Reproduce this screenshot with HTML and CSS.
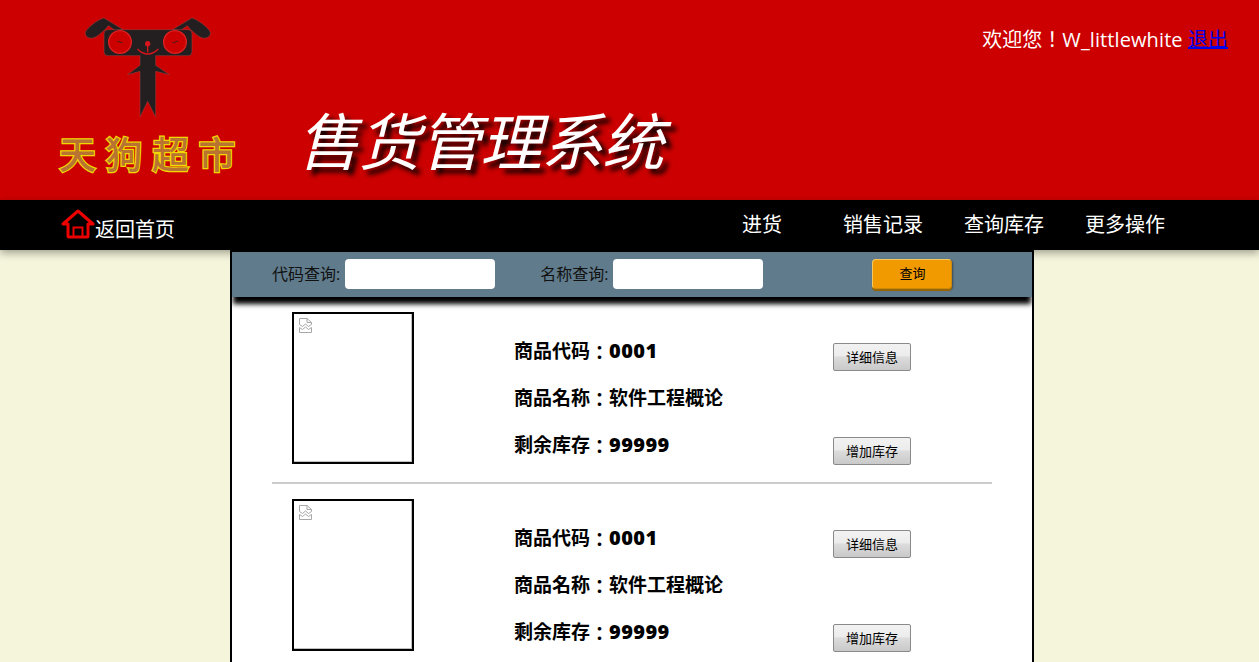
FILE: index.html
```html
<!DOCTYPE html>
<html lang="zh">
<head>
<meta charset="utf-8">
<title>售货管理系统</title>
<link rel="stylesheet" href="styles.css">
</head>
<body>
<header class="header">
  <div class="logo">
    <svg class="logo-dog" width="140" height="110" viewBox="120 40 420 330">
      <path class="ear" d="M250 90 L192 55 C175 58 140 85 136 98 C134 112 150 120 165 113 C175 108 185 98 195 90 L205 78 L225 92Z"/>
      <path class="ear" d="M397 90 L455 55 C472 58 507 85 511 98 C513 112 497 120 482 113 C472 108 462 98 452 90 L442 78 L422 92Z"/>
      <path class="ear" d="M204 90 H444 Q456 90 456 102 V156 Q456 168 444 168 H347 V197 L388 225 L347 215 V352 L323 305 L300 352 V215 L262 225 L300 197 V168 H204 Q192 168 192 156 V102 Q192 90 204 90Z"/>
      <circle class="eye" cx="240" cy="127" r="34"/>
      <circle class="eye" cx="405" cy="127" r="34"/>
      <path class="eye-mark" d="M232 124 L248 130 M398 130 L414 124"/>
      <circle class="nose" cx="323" cy="132" r="8"/>
      <path class="mark" d="M323 138 V158 M292 148 Q323 178 355 148"/>
    </svg>
    <div class="logo-text">天狗超市</div>
  </div>
  <h1 class="title">售货管理系统</h1>
  <div class="welcome"><span lang="ja">欢迎您！</span>W_littlewhite <a href="#">退出</a></div>
</header>
<nav class="nav">
  <a class="home" href="#">
    <svg width="34" height="30" viewBox="0 0 34 30">
      <path class="home-roof" d="M2 15 L17 2 L32 15 L27 15 L27 27 Q27 28 26 28 L8 28 Q7 28 7 27 L7 15Z"/>
      <path class="home-door" d="M12.500 28 L12.500 18.500 L21.500 18.500 L21.500 28"/>
    </svg>
    <span>返回首页</span>
  </a>
  <ul class="menu">
    <li class="menu-first">进货</li>
    <li>销售记录</li>
    <li>查询库存</li>
    <li>更多操作</li>
  </ul>
</nav>
<main class="page">
  <form class="search">
    <label class="field">代码查询:<input type="text"></label>
    <label class="field field-name">名称查询:<input type="text"></label>
    <button class="search-btn" type="button">查询</button>
  </form>
  <section class="item">
    <div class="cover"><svg class="broken" width="13" height="15" viewBox="0 0 13 15"><path d="M.5 6.500V.5H8L12.500 4.500V6.500L9.500 8.500L6.500 6L3.500 8.500ZM8 .5V4.500H12.500M.5 9.500L3.500 11.500L6.500 9L9.500 11.500L12.500 9.500V14.500H.5Z"/></svg></div>
    <div class="info" lang="ja">
      <p>商品代码<span class="colon">：</span><span class="num">0001</span></p>
      <p>商品名称<span class="colon">：</span>软件工程概论</p>
      <p>剩余库存<span class="colon">：</span><span class="num">99999</span></p>
    </div>
    <div class="actions">
      <button type="button">详细信息</button>
      <button type="button">增加库存</button>
    </div>
  </section>
  <hr class="rule">
  <section class="item">
    <div class="cover"><svg class="broken" width="13" height="15" viewBox="0 0 13 15"><path d="M.5 6.500V.5H8L12.500 4.500V6.500L9.500 8.500L6.500 6L3.500 8.500ZM8 .5V4.500H12.500M.5 9.500L3.500 11.500L6.500 9L9.500 11.500L12.500 9.500V14.500H.5Z"/></svg></div>
    <div class="info" lang="ja">
      <p>商品代码<span class="colon">：</span><span class="num">0001</span></p>
      <p>商品名称<span class="colon">：</span>软件工程概论</p>
      <p>剩余库存<span class="colon">：</span><span class="num">99999</span></p>
    </div>
    <div class="actions">
      <button type="button">详细信息</button>
      <button type="button">增加库存</button>
    </div>
  </section>
</main>
</body>
</html>
```
FILE: styles.css
```css
* { box-sizing: border-box; }
html, body { height: 662px; overflow: hidden; }
body {
  margin: 0;
  background: #f5f5dc;
  font-family: "Open Sans", "Noto Sans CJK SC", sans-serif;
  color: #000;
}
.header {
  height: 200px;
  background: #cc0000;
  display: flex;
  color: #fff;
}
.logo {
  width: 176px;
  margin-left: 59px;
  padding-top: 13px;
  display: flex;
  flex-direction: column;
  align-items: flex-start;
}
.logo-dog { display: block; margin-left: 21px; flex: none; }
.ear { fill: #231f20; stroke: #a04545; stroke-width: 1.500; }
.eye { fill: #cc0000; stroke: #e02020; stroke-width: 4; }
.eye-mark { fill: none; stroke: #231f20; stroke-width: 4; opacity: .7; }
.nose { fill: #d8141c; }
.mark { fill: none; stroke: #d8141c; stroke-width: 4; }
.logo-text {
  margin-top: 10px;
  font-size: 37px;
  line-height: 40px;
  white-space: nowrap;
  color: #b87333;
  font-family: "Noto Sans CJK SC", sans-serif;
  font-weight: 500;
  -webkit-text-stroke: 2.500px #f2d800;
  paint-order: stroke fill;
  letter-spacing: 9.500px;
}
.title {
  margin: 97px 0 0 62px;
  font-size: 62px;
  line-height: 82px;
  height: 82px;
  font-weight: 400;
  font-style: italic;
  letter-spacing: -1px;
  white-space: nowrap;
  font-family: "Noto Sans CJK SC", sans-serif;
  text-shadow: 5px 5px 5px #000;
}
.welcome {
  margin-left: auto;
  margin-right: 31px;
  padding-top: 24px;
  font-size: 20px;
  line-height: 30px;
  white-space: nowrap;
  letter-spacing: .1px;
}
.welcome span { font-family: "Noto Sans CJK JP", sans-serif; letter-spacing: 0; }
.welcome a {
  color: #0000ee;
  text-decoration: underline;
  text-underline-offset: 0;
  letter-spacing: 0;
}
.nav {
  position: relative;
  height: 50px;
  background: #000;
  box-shadow: 0 3px 8px rgba(0, 0, 0, .35);
  display: flex;
  color: #fff;
  font-size: 20px;
}
.home {
  margin-left: 61px;
  padding-top: 9px;
  display: flex;
  align-items: flex-start;
  color: #fff;
  text-decoration: none;
}
.home span { line-height: 30px; padding-top: 6px; }
.home svg { display: block; }
.home-roof { fill: none; stroke: #ee0000; stroke-width: 3; stroke-linejoin: round; }
.home-door { fill: none; stroke: #ee0000; stroke-width: 2; }
.menu {
  list-style: none;
  margin: 0 94px 0 auto;
  padding: 10px 0 0;
  display: flex;
  gap: 41px;
  line-height: 30px;
}
.menu-first { margin-right: 20px; }
.page {
  position: relative;
  width: 804px;
  height: 412px;
  margin-left: 230px;
  background: #fff;
  border: solid #000;
  border-width: 2px 2px 0;
  overflow: hidden;
}
.search {
  width: 800px;
  height: 45px;
  background: #607b8b;
  box-shadow: 0 8px 5px -1px #000;
  display: flex;
  align-items: flex-start;
  padding: 7px 0 0 40px;
  font-size: 16px;
  color: #111;
  position: relative;
}
.field { display: flex; align-items: center; height: 30px; line-height: 30px; white-space: nowrap; }
.field input {
  width: 150px;
  height: 30px;
  margin-left: 5px;
  border: 0;
  border-radius: 4px;
  background: #fff;
}
.field-name { margin-left: 45px; }
.search-btn {
  width: 80px;
  height: 30px;
  margin-left: 109px;
  border: 1px solid #c98a10;
  border-top-color: #f8c860;
  border-left-color: #f8c860;
  border-radius: 4px;
  background: #f09a00;
  box-shadow: 0 2px 0 #9a6500, 1px 1px 2px rgba(0,0,0,.4);
  font: 13px "Noto Sans CJK SC", sans-serif;
  color: #000;
  padding: 0 0 3px;
}
.item {
  height: 152px;
  margin-top: 15px;
  display: flex;
}
.cover {
  width: 122px;
  height: 152px;
  margin-left: 60px;
  border: 2px solid #000;
  box-shadow: inset -1px -1px 0 #c0c0c0;
  padding: 4px 0 0 5px;
  flex: none;
}
.broken { display: block; fill: #fff; stroke: #a8a8a8; stroke-width: 1; }
.info {
  margin-left: 100px;
  width: 319px;
  padding-top: 23px;
  font-size: 19px;
  font-weight: 700;
  line-height: 30px;
  font-family: "Noto Sans CJK JP", sans-serif;
}
.info p { margin: 0 0 17px; height: 30px; white-space: nowrap; }
.colon { vertical-align: -2px; }
.num { font-family: "Open Sans", sans-serif; font-size: 20px; font-weight: 800; letter-spacing: .4px; line-height: 1; }
.actions {
  display: flex;
  flex-direction: column;
  justify-content: space-between;
  padding: 31px 0 0;
  height: 153px;
}
.actions button {
  width: 78px;
  height: 28px;
  border: 1px solid #8a8a8a;
  border-radius: 2px;
  background: linear-gradient(#f2f2f2 0, #ececec 45%, #dcdcdc 50%, #c9c9c9 100%);
  font: 13px "Noto Sans CJK SC", sans-serif;
  color: #000;
  padding: 0 0 2px;
}
.rule {
  width: 720px;
  height: 2px;
  border: 0;
  background: #ccc;
  margin: 18px 0 0 40px;
}
.rule + .item { margin-top: 15px; }
```
